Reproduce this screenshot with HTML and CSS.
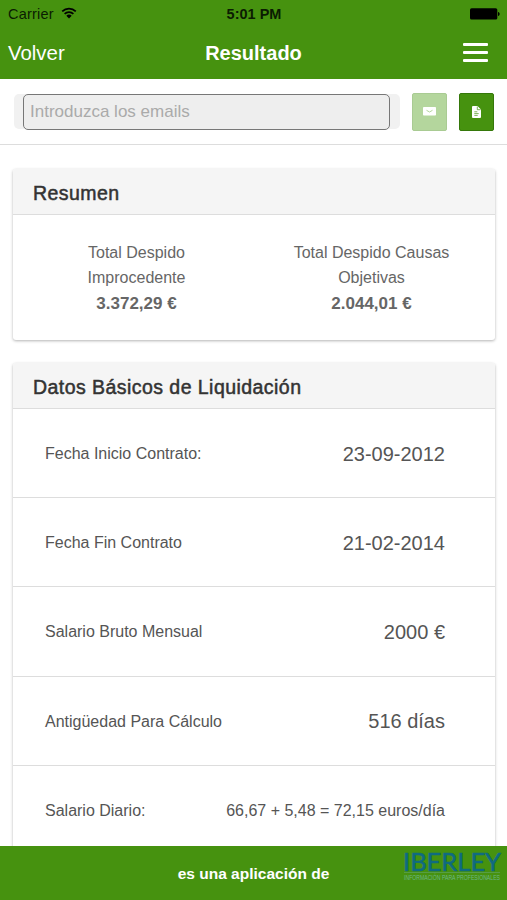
FILE: index.html
```html
<!DOCTYPE html>
<html lang="es">
<head>
  <meta charset="UTF-8">
  <meta name="viewport" content="width=device-width, initial-scale=1.0">
  <title>Resultado</title>
  <link rel="stylesheet" href="styles.css">
</head>
<body>

<div class="app">
  <header class="header">
    <div class="status-bar">
      <div class="status-left">
        <span class="carrier">Carrier</span>
        <svg class="wifi" width="16" height="12" viewBox="0 0 16 12">
          <path d="M1.2 4.3a9.8 9.8 0 0 1 13.6 0M3.6 6.9a6.3 6.3 0 0 1 8.8 0" fill="none" stroke="#000" stroke-width="1.7"/>
          <path d="M8 11.6L5.3 8.8a3.9 3.9 0 0 1 5.4 0z"/>
        </svg>
      </div>
      <span class="clock">5:01 PM</span>
      <svg class="battery" width="30" height="12" viewBox="0 0 30 12">
        <rect x="0" y="0.2" width="27.3" height="11.4" rx="1.6"/>
        <path d="M28 4c2.2.2 2.2 3.8 0 4z"/>
      </svg>
    </div>
    <div class="nav-bar">
      <a class="back">Volver</a>
      <h1 class="title">Resultado</h1>
      <div class="menu">
        <span></span>
        <span></span>
        <span></span>
      </div>
    </div>
  </header>

  <div class="email-bar">
    <div class="input-wrapper">
      <input class="email-input" type="text" placeholder="Introduzca los emails">
    </div>
    <button class="btn btn-disabled">
      <svg width="13" height="9" viewBox="0 0 13 9">
        <rect width="13" height="8.6" rx="0.8" fill="#fff"/>
        <path d="M3.5 3.3l3 1.7 3-1.7" fill="none" stroke="#b4d69d" stroke-width="1"/>
      </svg>
    </button>
    <button class="btn">
      <svg width="9" height="12" viewBox="0 0 9 12">
        <path d="M1 0h4.5L9 3.5V11a1 1 0 0 1-1 1H1a1 1 0 0 1-1-1V1a1 1 0 0 1 1-1z" fill="#fff"/>
        <path d="M5.3 0.5v3.2h3.2M2.3 5.8h3M2.3 7.6h4.4M2.3 9.4h3.4" fill="none" stroke="#46920f" stroke-width="0.7"/>
      </svg>
    </button>
  </div>

  <main class="content">
    <section class="card">
      <h2 class="card-title">Resumen</h2>
      <div class="summary">
        <div class="summary-item">
          <p>Total Despido<br>Improcedente</p>
          <strong>3.372,29 €</strong>
        </div>
        <div class="summary-item">
          <p>Total Despido Causas<br>Objetivas</p>
          <strong>2.044,01 €</strong>
        </div>
      </div>
    </section>

    <section class="card">
      <h2 class="card-title">Datos Básicos de Liquidación</h2>
      <div class="row">
        <span class="label">Fecha Inicio Contrato:</span>
        <span class="value">23-09-2012</span>
      </div>
      <div class="row">
        <span class="label">Fecha Fin Contrato</span>
        <span class="value">21-02-2014</span>
      </div>
      <div class="row">
        <span class="label">Salario Bruto Mensual</span>
        <span class="value">2000 €</span>
      </div>
      <div class="row">
        <span class="label">Antigüedad Para Cálculo</span>
        <span class="value">516 días</span>
      </div>
      <div class="row">
        <span class="label">Salario Diario:</span>
        <span class="value value-small">66,67 + 5,48 = 72,15 euros/día</span>
      </div>
    </section>
  </main>

  <footer class="footer">
    <span class="footer-text">es una aplicación de</span>
    <svg class="logo" width="100" height="46" viewBox="0 0 100 46">
      <text class="logo-name" x="0" y="24.5" textLength="98" lengthAdjust="spacingAndGlyphs">IBERLEY</text>
      <path d="M1 26.5h96" stroke="#5aa050" stroke-width="0.8"/>
      <text class="logo-tag" x="1" y="34" textLength="96" lengthAdjust="spacingAndGlyphs">INFORMACIÓN PARA PROFESIONALES</text>
    </svg>
  </footer>
</div>

</body>
</html>
```

FILE: styles.css
```css
* {
  box-sizing: border-box;
}

body {
  margin: 0;
  background-color: #fff;
  font-family: "Liberation Sans", Arial, sans-serif;
  color: #666;
}

.app {
  display: flex;
  flex-direction: column;
  height: 900px;
  overflow: hidden;
}

.header {
  flex: none;
  height: 79px;
  background-color: #46920f;
}

.status-bar {
  display: grid;
  grid-template-columns: 1fr auto 1fr;
  align-items: center;
  height: 27px;
  padding: 1px 7px 0 8px;
  color: #0b1c02;
  font-size: 14.5px;
}

.status-left {
  display: flex;
  align-items: center;
  gap: 7px;
}

.carrier {
  letter-spacing: 0.2px;
}

.wifi {
  margin-top: -3px;
}

.clock {
  font-size: 14.5px;
  font-weight: bold;
}

.battery {
  justify-self: end;
}

.nav-bar {
  display: grid;
  grid-template-columns: 1fr auto 1fr;
  align-items: center;
  height: 52px;
  padding: 0 8px;
  color: #fff;
}

.back {
  font-size: 20.4px;
}

.title {
  margin: 0;
  font-size: 20px;
  font-weight: bold;
}

.menu {
  display: flex;
  flex-direction: column;
  justify-self: end;
  gap: 5px;
  width: 25px;
  margin: 0 11px 1px 0;
}

.menu span {
  height: 3px;
  border-radius: 1px;
  background-color: #fff;
}

.email-bar {
  display: flex;
  flex: none;
  align-items: center;
  height: 66px;
  padding: 0 13px 0 14px;
  border-bottom: 1px solid #ddd;
}

.input-wrapper {
  width: 386px;
  height: 35px;
  margin-right: 12px;
  padding: 0 10px 0 9px;
  border-radius: 5px;
  background-color: #f1f1f1;
}

.email-input {
  display: block;
  width: 100%;
  height: 36px;
  padding: 0 6px;
  border: 1.5px solid #777;
  border-radius: 5px;
  background-color: #eee;
  font-family: inherit;
  font-size: 17px;
}

.email-input::placeholder {
  color: #aaa;
}

.btn {
  display: flex;
  align-items: center;
  justify-content: center;
  width: 35px;
  height: 38px;
  margin-right: 12px;
  padding: 0;
  border: 1px solid #35780a;
  border-radius: 2px;
  background-color: #46920f;
}

.btn:last-child {
  margin-right: 0;
}

.btn-disabled {
  border-color: #a9cb93;
  background-color: #b4d69d;
}

.content {
  flex: 1;
  min-height: 0;
  padding: 24px 12px 0 13px;
  overflow: hidden;
}

.card {
  margin-bottom: 23px;
  border-radius: 3px;
  background-color: #fff;
  box-shadow: 0 1px 3px rgba(0, 0, 0, 0.3);
}

.card-title {
  height: 46px;
  margin: 0;
  padding-left: 20px;
  border-bottom: 1px solid #ddd;
  border-radius: 3px 3px 0 0;
  background-color: #f5f5f5;
  color: #333;
  font-size: 19.5px;
  font-weight: normal;
  letter-spacing: 0.45px;
  line-height: 48px;
  -webkit-text-stroke: 0.5px #333;
}

.summary {
  display: flex;
  height: 125px;
  padding: 26px 6px 0;
  text-align: center;
}

.summary-item {
  flex: 1;
  font-size: 16px;
}

.summary-item p {
  margin: 0;
  line-height: 24.5px;
}

.summary-item strong {
  display: block;
  font-size: 17px;
  line-height: 27px;
}

.row {
  display: flex;
  align-items: center;
  justify-content: space-between;
  height: 89.2px;
  padding: 2px 50px 0 32px;
  border-bottom: 1px solid #ddd;
  color: #555;
}

.label {
  font-size: 16px;
}

.value {
  font-size: 20px;
}

.value-small {
  font-size: 16px;
}

.footer {
  display: grid;
  grid-template-columns: 1fr auto 1fr;
  flex: none;
  height: 54px;
  padding: 0 6px;
  background-color: #46920f;
  color: #fff;
}

.footer-text {
  grid-column: 2;
  font-size: 15.5px;
  font-weight: bold;
  line-height: 56px;
}

.logo {
  justify-self: end;
  margin-right: -2px;
  overflow: visible;
}

.logo-name {
  fill: #0f6b80;
  font-family: Lato, sans-serif;
  font-size: 25px;
  stroke: #0f6b80;
  stroke-width: 0.6px;
}

.logo-tag {
  fill: #6db587;
  font-family: "Liberation Sans", Arial, sans-serif;
  font-size: 7.5px;
}
```
